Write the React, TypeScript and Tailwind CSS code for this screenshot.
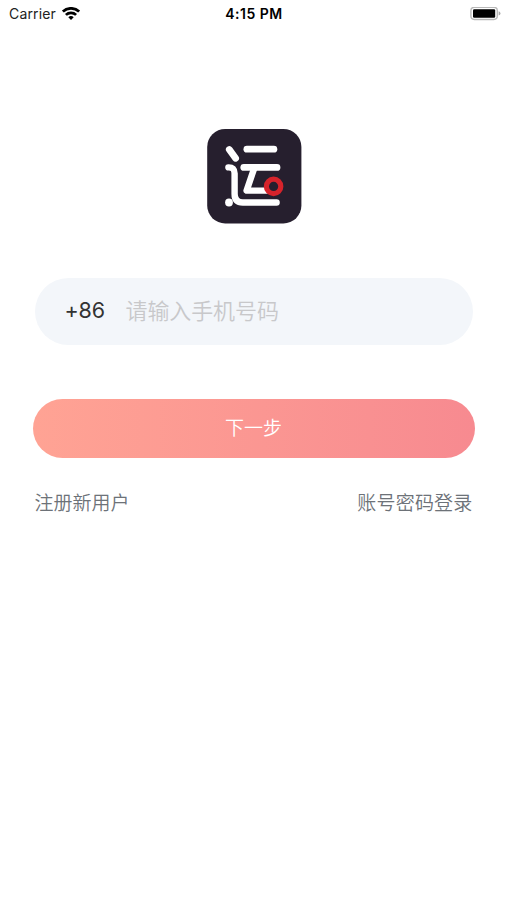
function WifiIcon() {
  return (
    <svg className="ml-[6px] h-[14px] w-[18px]" viewBox="0 0 18 14" fill="none" stroke="#000" strokeWidth="2.7">
      <path d="M0.9 4.6a11.6 11.6 0 0 1 16.2 0" />
      <path d="M3.9 7.9a7.3 7.3 0 0 1 10.2 0" />
      <path d="M9 13.1L6.3 10.3a3.9 3.9 0 0 1 5.4 0z" fill="#000" stroke="none" />
    </svg>
  );
}

function BatteryIcon() {
  return (
    <svg className="h-[14px] w-[31px]" viewBox="0 0 31 14">
      <rect x="0.9" y="0.3" width="26.4" height="12.2" rx="3.4" fill="#fff" stroke="#b8b8b8" strokeWidth="1.4" />
      <rect x="3" y="2.2" width="22.2" height="8.6" rx="1.2" fill="#000" />
      <path d="M28.6 4.2q1.9 0.6 1.9 2.2t-1.9 2.2z" fill="#a9a9a9" />
    </svg>
  );
}

function Logo() {
  return (
    <svg className="ml-px h-[95px] w-[95px]" viewBox="0 0 95 95" fill="none">
      <rect x="0.2" width="94.2" height="94.4" rx="18" fill="#261f2e" />
      <g stroke="#fff" strokeWidth="6.8" strokeLinecap="round" strokeLinejoin="round">
        <path d="M22.3 20.5L28.6 29.2" />
        <path d="M39.9 20.2H66.9" />
        <path d="M36.8 38.4H70" />
        <path d="M21.4 38.4Q27.6 38.2 27.6 44.5V65Q27.6 73.5 35.8 73.5H69.6" strokeWidth="6.4" />
        <path d="M47.1 39.6L39.6 61.6H60" strokeWidth="6.4" />
      </g>
      <circle cx="22" cy="73.5" r="3.9" fill="#fff" />
      <circle cx="66.6" cy="57.4" r="7.2" fill="#261f2e" stroke="#d6232b" strokeWidth="5.2" />
    </svg>
  );
}

export default function App() {
  return (
    <div className="flex h-[900px] w-[507px] flex-col bg-white font-['Inter','Noto_Sans_CJK_SC',sans-serif]">
      <header className="grid h-[27px] grid-cols-3 items-center text-[14px] leading-none text-black">
        <div className="flex items-center pl-[9px]">
          <span className="w-[47px] whitespace-nowrap tracking-[0.15px] text-[#222]">Carrier</span>
          <WifiIcon />
        </div>
        <span className="pl-px text-center font-semibold tracking-[0.5px]">4:15 PM</span>
        <div className="flex justify-end pr-[6px]">
          <BatteryIcon />
        </div>
      </header>
      <main className="flex flex-col items-center px-[33px] pt-[102px]">
        <Logo />
        <div className="mt-[54px] flex h-[67px] w-[438px] items-center rounded-full bg-[#f3f6fa] pb-px pl-[30px] leading-none">
          <span className="w-[61px] text-[21.5px] tracking-[-0.2px] text-[#333]">+86</span>
          <span className="pb-px text-[22px] font-[350] tracking-[-0.1px] text-[#c8c8ca]">请输入手机号码</span>
        </div>
        <button className="mt-[54px] h-[59px] w-[442px] rounded-full bg-linear-to-r from-[#ffa394] to-[#f78a90] text-[19px] font-[350] leading-none text-white">
          下一步
        </button>
        <nav className="mt-[36px] flex w-[438px] justify-between text-[19px] font-[350] leading-[20px] text-[#6d7278]">
          <a>注册新用户</a>
          <a className="tracking-[0.2px]">账号密码登录</a>
        </nav>
      </main>
    </div>
  );
}
